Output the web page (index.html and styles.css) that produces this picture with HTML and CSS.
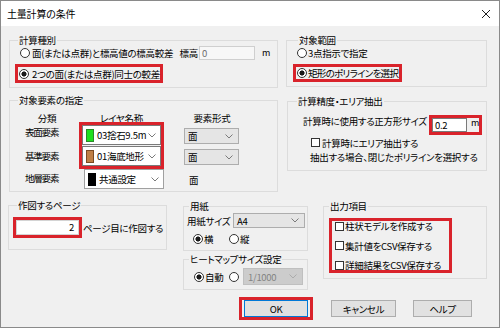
FILE: index.html
```html
<!DOCTYPE html>
<html lang="ja">
<head>
<meta charset="utf-8">
<title>土量計算の条件</title>
<link rel="stylesheet" href="styles.css">
</head>
<body>
<div class="window">
  <div class="titlebar">
    <span class="title">土量計算の条件</span>
    <svg class="close" width="10" height="10" viewBox="0 0 10 10"><path d="M1 1L9 9M9 1L1 9" stroke="#1e1e1e" stroke-width="1" fill="none"/></svg>
  </div>
  <div class="content">
    <div class="row row-top">
      <fieldset class="g g-calc">
        <legend>計算種別</legend>
        <div class="line line-elev">
          <span class="radio"></span><span class="rl">面(または点群)と標高値の標高較差</span>
          <span class="elev-label">標高</span><span class="field field-disabled">0</span><span class="unit">m</span>
        </div>
        <div class="hl hl-calc"><span class="radio on"></span><span class="rl">2つの面(または点群)同士の較差</span></div>
      </fieldset>
      <fieldset class="g g-range">
        <legend>対象範囲</legend>
        <div class="line line-3pt"><span class="radio"></span><span class="rl">3点指示で指定</span></div>
        <div class="hl hl-range"><span class="radio on"></span><span class="rl">矩形のポリラインを選択</span></div>
      </fieldset>
    </div>

    <div class="row row-mid">
      <fieldset class="g g-target">
        <legend>対象要素の指定</legend>
        <div class="tcols thead"><span>分類</span><span>レイヤ名称</span><span class="c3">要素形式</span></div>
        <div class="tcols tbody">
          <span class="rowlabel r1">表面要素</span>
          <div class="hl hl-layers">
            <div class="layer"><span class="swatch sw-green"></span><span class="lt">03捨石9.5m</span><svg class="chev" width="8" height="5" viewBox="0 0 8 5"><path d="M0.5 0.5L4 4L7.5 0.5" fill="none" stroke="#7a7a7a"/></svg></div>
            <div class="layer"><span class="swatch sw-brown"></span><span class="lt">01海底地形</span><svg class="chev" width="8" height="5" viewBox="0 0 8 5"><path d="M0.5 0.5L4 4L7.5 0.5" fill="none" stroke="#7a7a7a"/></svg></div>
          </div>
          <div class="dd dd1"><span class="ddt">面</span><svg class="chev" width="8" height="5" viewBox="0 0 8 5"><path d="M0.5 0.5L4 4L7.5 0.5" fill="none" stroke="#7a7a7a"/></svg></div>
          <span class="rowlabel r2">基準要素</span>
          <div class="dd dd2"><span class="ddt">面</span><svg class="chev" width="8" height="5" viewBox="0 0 8 5"><path d="M0.5 0.5L4 4L7.5 0.5" fill="none" stroke="#7a7a7a"/></svg></div>
          <span class="rowlabel r3">地層要素</span>
          <div class="layer layer3"><span class="swatch sw-black"></span><span class="lt">共通設定</span><svg class="chev" width="8" height="5" viewBox="0 0 8 5"><path d="M0.5 0.5L4 4L7.5 0.5" fill="none" stroke="#7a7a7a"/></svg></div>
          <span class="plain">面</span>
        </div>
      </fieldset>
      <fieldset class="g g-acc">
        <legend>計算精度・エリア抽出</legend>
        <div class="acc-row1">
          <span class="acc-text">計算時に使用する正方形サイズ</span>
          <div class="hl hl-size"><span class="field field-size">0.2</span><span class="unit-sm">m</span></div>
        </div>
        <div class="acc-row2"><span class="check"></span><span class="cl">計算時にエリア抽出する</span></div>
        <div class="acc-row3">抽出する場合、閉じたポリラインを選択する</div>
      </fieldset>
    </div>

    <div class="row row-bottom">
      <fieldset class="g g-page">
        <legend>作図するページ</legend>
        <div class="page-row">
          <div class="hl hl-page"><span class="field field-page">2</span></div>
          <span class="page-text">ページ目に作図する</span>
        </div>
      </fieldset>
      <div class="right-area">
        <div class="groups">
          <div class="col-mid">
            <fieldset class="g g-paper">
              <legend>用紙</legend>
              <div class="paper-row1">
                <span class="paper-label">用紙サイズ</span>
                <div class="dd dd-paper"><span class="ddt">A4</span><svg class="chev" width="8" height="5" viewBox="0 0 8 5"><path d="M0.5 0.5L4 4L7.5 0.5" fill="none" stroke="#7a7a7a"/></svg></div>
              </div>
              <div class="paper-row2">
                <span class="opt opt-yoko"><span class="radio on"></span><span class="rl">横</span></span>
                <span class="opt"><span class="radio"></span><span class="rl">縦</span></span>
              </div>
            </fieldset>
            <fieldset class="g g-heat">
              <legend>ヒートマップサイズ設定</legend>
              <div class="heat-row">
                <span class="opt opt-auto"><span class="radio on"></span><span class="rl">自動</span></span>
                <span class="radio"></span>
                <div class="dd dd-scale"><span class="ddt">1/1000</span><svg class="chev" width="8" height="5" viewBox="0 0 8 5"><path d="M0.5 0.5L4 4L7.5 0.5" fill="none" stroke="#ababab"/></svg></div>
              </div>
            </fieldset>
          </div>
          <fieldset class="g g-out">
            <legend>出力項目</legend>
            <div class="hl hl-out">
              <div class="out-item"><span class="check"></span><span class="cl">柱状モデルを作成する</span></div>
              <div class="out-item"><span class="check"></span><span class="cl">集計値をCSV保存する</span></div>
              <div class="out-item"><span class="check"></span><span class="cl">詳細結果をCSV保存する</span></div>
            </div>
          </fieldset>
        </div>
        <div class="btn-row">
          <div class="hl hl-ok"><button class="btn btn-default">OK</button></div>
          <button class="btn btn-cancel">キャンセル</button>
          <button class="btn btn-help">ヘルプ</button>
        </div>
      </div>
    </div>
  </div>
</div>
</body>
</html>
```

FILE: styles.css
```css
* { box-sizing: border-box; }
html, body { margin: 0; padding: 0; }
body {
  width: 500px;
  height: 328px;
  overflow: hidden;
  background: #ffffff;
  font-family: "Noto Sans CJK JP", "Noto Sans", sans-serif;
  font-size: 9.5px;
  letter-spacing: -0.3px;
  line-height: 12px;
  color: #000;
  font-feature-settings: "palt" 1;
}

.window {
  width: 500px;
  height: 328px;
  border: 1px solid #8a8a8a;
  background: #f0f0f0;
  display: flex;
  flex-direction: column;
}

.titlebar {
  flex: none;
  height: 25px;
  background: #fff;
  display: flex;
  align-items: center;
  justify-content: space-between;
  padding: 0 8px 0 6px;
}
.title { font-size: 10px; letter-spacing: -0.2px; }
.close { display: block; }

.content { padding-left: 7px; }

.row { display: flex; align-items: flex-start; }
.row-top { margin-top: 8px; }
.row-mid { margin-top: 6px; }
.row-bottom { margin-top: 7px; }

/* group box */
.g {
  margin: 0;
  padding: 0;
  min-width: 0;
  border: 1px solid #dcdcdc;
}
.g legend {
  padding: 0 1px;
  line-height: 12px;
  white-space: nowrap;
}

/* radio / checkbox */
.radio {
  flex: none;
  display: inline-block;
  width: 10px;
  height: 10px;
  border: 1px solid #333;
  border-radius: 50%;
  background: #fff;
}
.radio.on { background: radial-gradient(circle, #1a1a1a 0 2.3px, #fff 2.8px); }
.rl { margin-left: 2px; white-space: nowrap; }
.check {
  flex: none;
  display: inline-block;
  width: 9px;
  height: 9px;
  border: 1px solid #333;
  background: #fff;
}
.cl { margin-left: 2px; white-space: nowrap; }

.hl { border: 3px solid #d9232b; }

.field {
  background: #fff;
  border: 1px solid #b9b9b9;
  white-space: nowrap;
}

.chev { flex: none; display: block; }

/* 計算種別 */
.g-calc { margin-left: 1px; width: 269px; height: 54px; padding: 0 7px 0 5px; }
.g-calc legend { margin-left: 3px; }
.line { display: flex; align-items: center; height: 14px; }
.line-elev .radio { margin-left: 5px; }
.elev-label { margin-left: auto; white-space: nowrap; }
.field-disabled {
  flex: none;
  width: 56px;
  height: 14px;
  margin-left: 1px;
  background: #f7f7f7;
  border-color: #cfcfcf;
  color: #6d6d6d;
  padding-left: 2px;
  line-height: 12px;
}
.unit { margin-left: 7px; font-size: 9px; }
.hl-calc {
  display: flex;
  align-items: center;
  width: 148px;
  height: 19px;
  margin-top: 4px;
}
.hl-calc .radio { margin-left: 1px; }
.hl-calc .rl { margin-left: 3px; }

/* 対象範囲 */
.g-range { margin-left: 8px; width: 201px; height: 53px; padding: 0 0 0 6px; }
.g-range legend { margin-left: 5px; }
.line-3pt .radio { margin-left: 4px; }
.line-3pt .rl { margin-left: 1px; }
.hl-range {
  display: flex;
  align-items: center;
  width: 109px;
  height: 18px;
  margin-top: 4px;
}
.hl-range .radio { margin-left: 1px; }
.hl-range .rl { margin-left: 1px; letter-spacing: -0.7px; }

/* 対象要素の指定 */
.g-target { margin-left: 1px; width: 269px; height: 98px; padding: 0 0 0 5px; }
.g-target legend { margin-left: 3px; }
.tcols { display: grid; grid-template-columns: 64px 85px 76px; }
.thead {
  height: 16px;
  line-height: 10px;
  padding-top: 7px;
  text-align: center;
}
.thead span { white-space: nowrap; }
.thead .c3 { padding-left: 20px; }
.tbody { grid-template-rows: 23px 24px 21px; }
.rowlabel {
  align-self: center;
  padding-left: 10px;
  padding-bottom: 3px;
  letter-spacing: -1.2px;
  white-space: nowrap;
}
.r1 { grid-area: 1 / 1; }
.r2 { grid-area: 2 / 1; }
.r3 { grid-area: 3 / 1; }
.hl-layers {
  grid-column: 2;
  grid-row: 1 / 3;
  height: 47px;
  display: flex;
  flex-direction: column;
  gap: 1px;
}
.layer {
  height: 20px;
  background: #fff;
  border: 1px solid #a0a0a0;
  display: flex;
  align-items: center;
}
.hl-layers .layer { border-color: #7a7a7a; }
.layer3 { grid-area: 3 / 2; align-self: start; margin-left: 5px; }
.swatch {
  flex: none;
  width: 8px;
  height: 13px;
  margin-left: 3px;
  border: 1px solid #555;
}
.sw-green { background: #1fe01f; border-color: #2a8a2a; }
.sw-brown { background: #bf7f45; border-color: #7a4a22; }
.sw-black { background: #000; border-color: #000; }
.lt { margin-left: 3px; white-space: nowrap; }
.layer .chev { margin-left: auto; margin-right: 4px; }

.dd {
  background: #e5e5e5;
  border: 1px solid #adadad;
  display: flex;
  align-items: center;
}
.dd .ddt { padding-left: 3px; white-space: nowrap; }
.dd .chev { margin-left: auto; margin-right: 5px; }
.dd1 { grid-area: 1 / 3; align-self: start; margin: 6px 0 0 20px; width: 55px; height: 16px; }
.dd2 { grid-area: 2 / 3; align-self: start; margin: 4px 0 0 20px; width: 55px; height: 16px; }
.plain { grid-area: 3 / 3; align-self: center; padding-left: 25px; }

/* 計算精度・エリア抽出 */
.g-acc { margin-left: 9px; margin-top: 1px; width: 200px; height: 76px; padding: 0 4px 0 5px; }
.g-acc legend { margin-left: 4px; }
.acc-row1 { display: flex; align-items: flex-start; margin-top: 8px; }
.acc-text { padding-left: 10px; line-height: 13px; white-space: nowrap; }
.hl-size {
  margin-left: auto;
  width: 53px;
  height: 20px;
  display: flex;
  align-items: flex-start;
  flex: none;
}
.field-size {
  flex: none;
  width: 35px;
  height: 14px;
  border-color: #7a7a7a;
  padding-left: 2px;
  line-height: 12px;
}
.unit-sm { margin-left: 4px; font-size: 9px; line-height: 9px; }
.acc-row2 {
  display: flex;
  align-items: center;
  height: 13px;
  margin-top: 1px;
  padding-left: 18px;
}
.acc-row3 { margin-top: 2px; line-height: 13px; padding-left: 17px; white-space: nowrap; }

/* 作図するページ */
.g-page { width: 159px; height: 51px; padding: 0 0 0 4px; }
.g-page legend { margin-left: 4px; }
.page-row { display: flex; align-items: center; margin-top: 6px; }
.hl-page { width: 69px; height: 21px; flex: none; }
.field-page {
  display: block;
  height: 15px;
  border-color: #d4d4d4;
  text-align: right;
  padding-right: 4px;
  line-height: 13px;
}
.page-text { margin-left: 1px; white-space: nowrap; }

/* right area */
.right-area { margin-left: 16px; display: flex; flex-direction: column; }
.groups { display: flex; align-items: flex-start; }
.col-mid { margin-top: 1px; display: flex; flex-direction: column; }

.g-paper { width: 125px; height: 51px; padding: 0 2px 0 3px; }
.g-paper legend { margin-left: 2px; }
.paper-row1 { display: flex; align-items: flex-start; height: 17px; }
.paper-label { margin-top: 3px; white-space: nowrap; }
.dd-paper { margin-left: auto; margin-top: 1px; width: 72px; height: 15px; }
.paper-row2 { display: flex; align-items: center; height: 13px; margin-top: 3px; padding-left: 6px; }
.opt { display: inline-flex; align-items: center; }
.opt-yoko { width: 36px; }
.opt .rl { margin-left: 1px; }

.g-heat { margin-top: 2px; width: 125px; height: 37px; padding: 0 0 0 3px; }
.g-heat legend { margin-left: 2px; }
.heat-row { display: flex; align-items: center; height: 17px; margin-top: 3px; padding-left: 7px; }
.opt-auto { width: 35px; }
.dd-scale {
  margin-left: 4px;
  width: 60px;
  height: 17px;
  background: #cccccc;
  border-color: #bfbfbf;
  color: #838383;
}
.dd-scale .ddt { padding-left: 4px; }

.g-out { margin-left: 15px; margin-top: 1px; width: 164px; height: 79px; padding: 0 0 0 5px; }
.g-out legend { margin-left: 0; }
.hl-out {
  margin-top: 6px;
  width: 123px;
  height: 55px;
  padding-left: 3px;
  display: flex;
  flex-direction: column;
  gap: 9.5px;
}
.out-item { display: flex; align-items: center; height: 10px; line-height: 10px; }
.out-item .cl { margin-left: 1px; }

/* buttons */
.btn-row { display: flex; align-items: flex-start; margin-top: 7px; }
.hl-ok { margin-left: 56px; width: 74px; height: 23px; padding: 0 2px; flex: none; }
.btn {
  height: 17px;
  margin: 0;
  padding: 0;
  background: #e1e1e1;
  border: 1px solid #adadad;
  font-family: inherit;
  font-size: 9.5px;
  letter-spacing: -0.3px;
  line-height: 12px;
  color: #000;
  display: flex;
  align-items: center;
  justify-content: center;
  font-feature-settings: "palt" 1;
}
.btn-default { width: 64px; border-color: #0078d7; }
.btn-cancel { margin-left: 18px; margin-top: 3px; width: 65px; }
.btn-help { margin-left: 17px; margin-top: 3px; width: 59px; }
```
